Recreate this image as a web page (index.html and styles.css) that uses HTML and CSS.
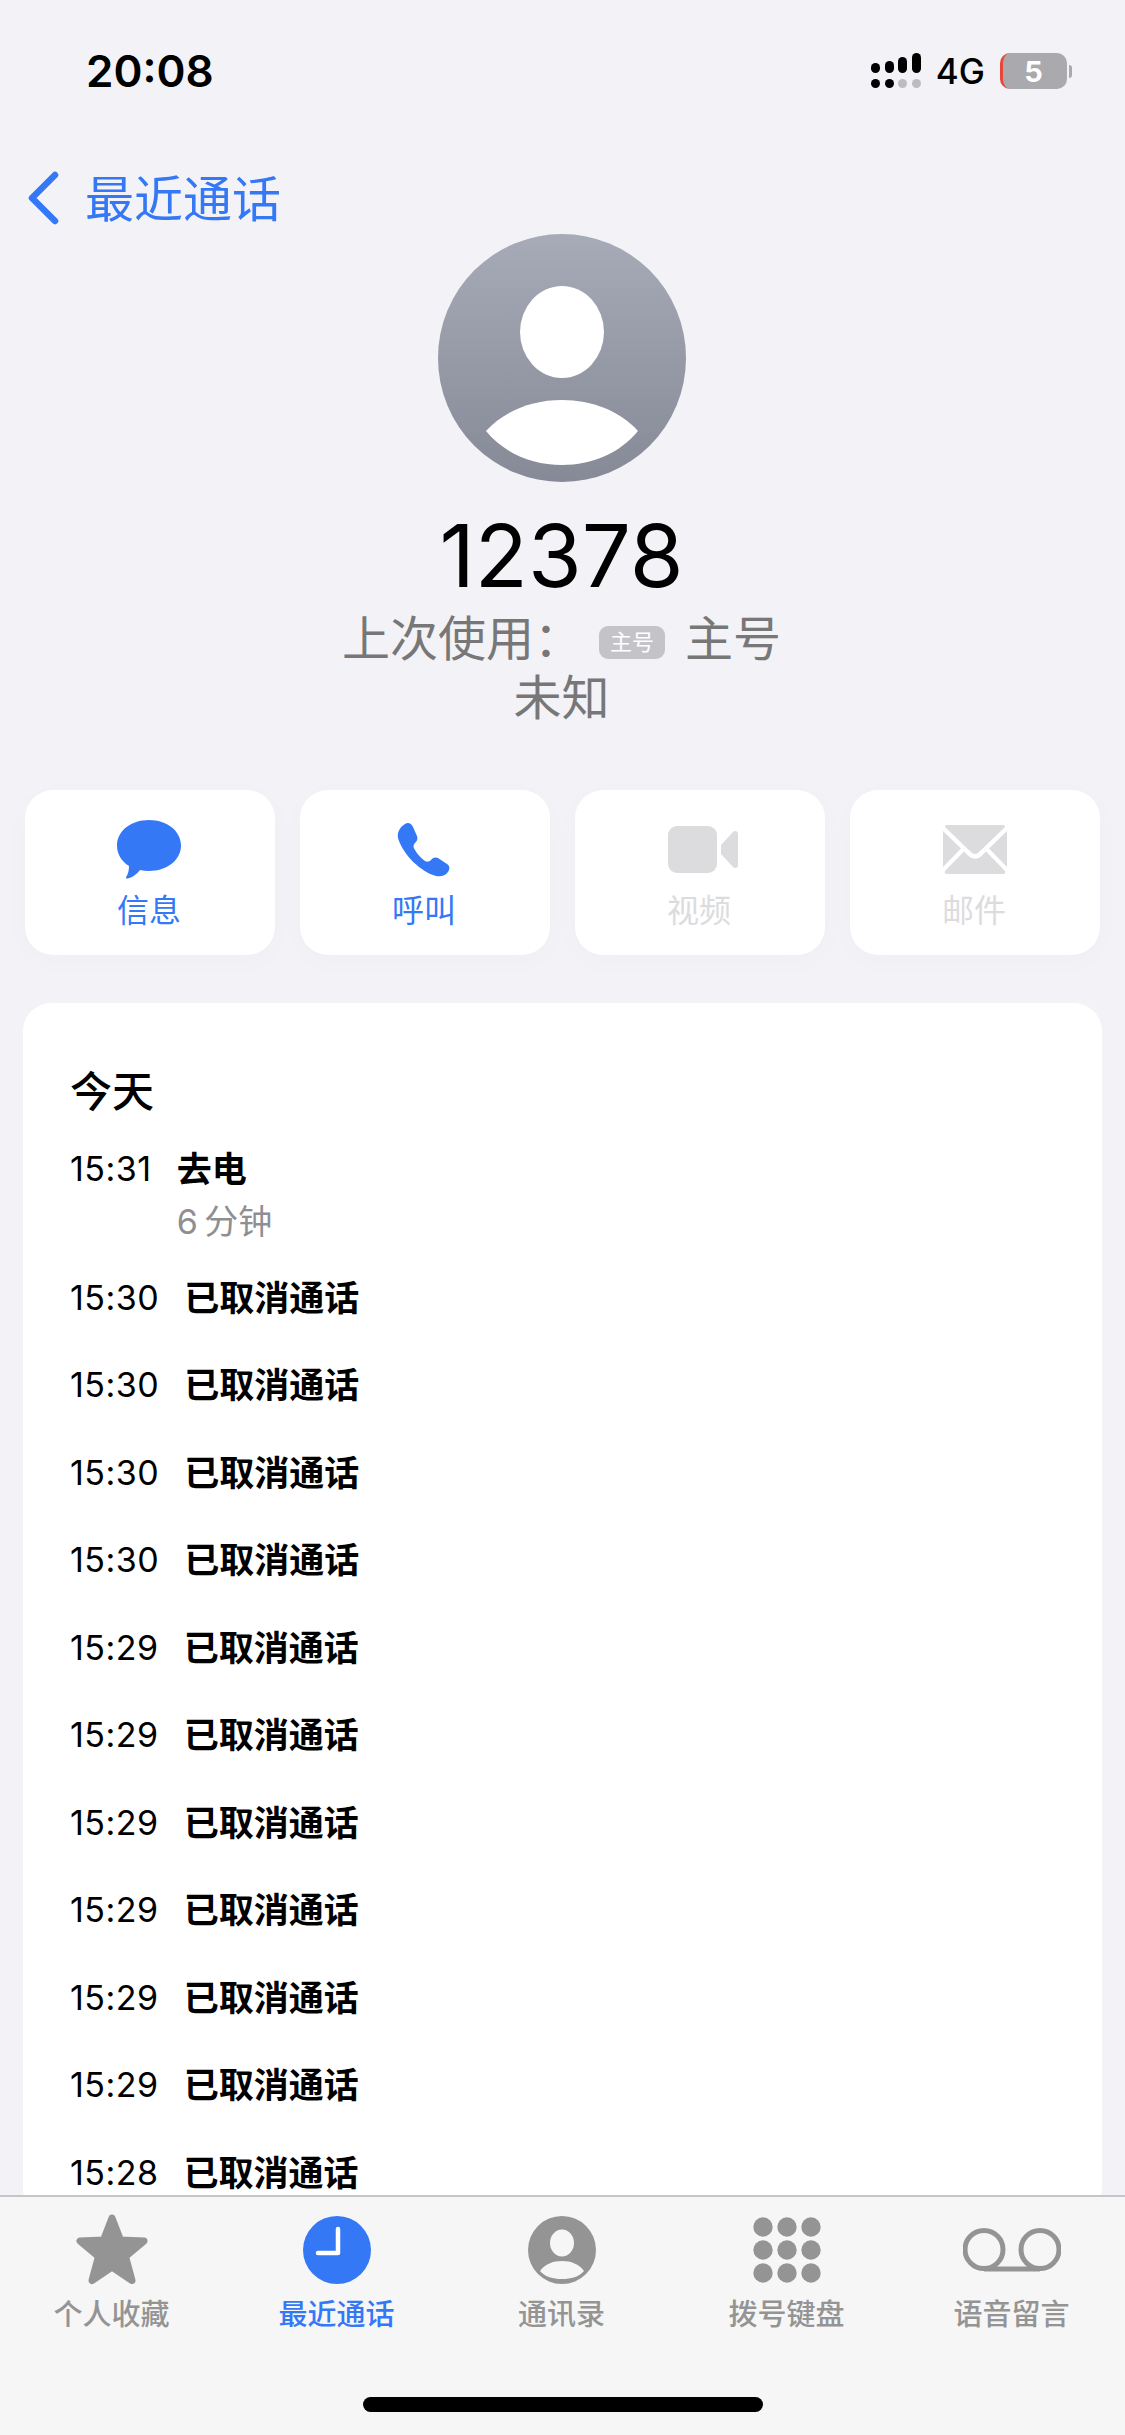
FILE: index.html
```html
<!DOCTYPE html>
<html lang="zh-CN">
<head>
  <meta charset="UTF-8" />
  <meta name="viewport" content="width=device-width, initial-scale=1.0"/>
  <title>12378 - 最近通话</title>
  <link rel="stylesheet" href="styles.css">
</head>
<body>
  <div class="phone">
    <div class="status-bar">
      <div class="clock">20:08</div>
      <div class="status-icons">
        <svg class="signal" width="50" height="36" viewBox="0 0 50 36">
          <rect x="0" y="10" width="9" height="10" rx="4.5" fill="#000"/>
          <rect x="14" y="8" width="9" height="12" rx="4.5" fill="#000"/>
          <rect x="27" y="4" width="9" height="16" rx="4.5" fill="#000"/>
          <rect x="41" y="0" width="9" height="20" rx="4.5" fill="#000"/>
          <circle cx="4.5" cy="30.5" r="4.5" fill="#000"/>
          <circle cx="18.5" cy="30.5" r="4.5" fill="#000"/>
          <circle cx="31.5" cy="30.5" r="4.5" fill="#bdbdc1"/>
          <circle cx="45.5" cy="30.5" r="4.5" fill="#bdbdc1"/>
        </svg>
        <span class="network">4G</span>
        <div class="battery"><span class="battery-level">5</span></div>
        <div class="battery-tip"></div>
      </div>
    </div>

    <div class="main">
      <a class="back">
        <svg width="32" height="54" viewBox="0 0 32 54">
          <path d="M28 4 L5 27 L28 50" fill="none" stroke="#3478f6" stroke-width="6.5" stroke-linecap="round" stroke-linejoin="round"/>
        </svg>
        <span>最近通话</span>
      </a>

      <div class="contact">
        <svg class="avatar" width="248" height="248" viewBox="0 0 248 248">
          <defs>
            <linearGradient id="avatarFill" x1="0" y1="0" x2="0" y2="1">
              <stop offset="0" stop-color="#a7abb7"/>
              <stop offset="1" stop-color="#858a96"/>
            </linearGradient>
          </defs>
          <circle cx="124" cy="124" r="124" fill="url(#avatarFill)"/>
          <ellipse cx="124" cy="98" rx="42" ry="46" fill="#fff"/>
          <path d="M48 197 C66 177 94 166 124 166 C154 166 182 177 200 197 C182 219 154 231 124 231 C94 231 66 219 48 197 Z" fill="#fff"/>
        </svg>
        <div class="number">12378</div>
        <div class="sub-line">上次使用：<span class="sim-badge">主号</span>主号</div>
        <div class="sub-line">未知</div>
      </div>

      <div class="actions">
        <div class="action">
          <svg width="64" height="60" viewBox="0 0 64 60">
            <path d="M32 0 C50 0 64 11 64 25.500 C64 40 50 51 32 51 C29 51 26 50.700 23 50 C20 54 15 58 10 58.500 C9 58.600 8.600 57.800 9.200 57 C11 54.500 12 50.500 12 46 C4.500 41.500 0 34 0 25.500 C0 11 14 0 32 0 Z" fill="#3478f6"/>
          </svg>
          <span>信息</span>
        </div>
        <div class="action">
          <svg width="54" height="54" viewBox="0 0 54 54">
            <path d="M8 1 C11 -1 14 0 16 4 L20 13 C21 16 20 18 18 20 C16 22 16 24 18 27 C21 32 24 35 28 38 C30 39 32 39 34 37 C36 34 39 34 41 35 L50 41 C53 43 53 46 51 49 C48 53 44 54 39 53 C24 49 6 32 1 15 C0 9 3 4 8 1 Z" fill="#3478f6"/>
          </svg>
          <span>呼叫</span>
        </div>
        <div class="action off">
          <svg class="video-icon" width="70" height="48" viewBox="0 0 70 48">
            <rect x="0" y="0" width="49" height="47" rx="9" fill="#dcdcde"/>
            <path d="M53 19 L65 6 C67 4 70 5 70 8 L70 39 C70 42 67 43 65 41 L53 28 Z" fill="#dcdcde"/>
          </svg>
          <span>视频</span>
        </div>
        <div class="action off">
          <svg class="mail-icon" width="64" height="50" viewBox="0 0 64 50">
            <path d="M4 0 L60 0 C62 0 62.500 1.500 61.500 2.500 L36 27 C33.500 29.500 30.500 29.500 28 27 L2.500 2.500 C1.500 1.500 2 0 4 0 Z" fill="#dcdcde"/>
            <path d="M0 6 L18 23.500 L0 42 Z" fill="#dcdcde"/>
            <path d="M64 6 L46 23.500 L64 42 Z" fill="#dcdcde"/>
            <path d="M21 26.500 L25.500 31 C29.500 34.500 34.500 34.500 38.500 31 L43 26.500 L62 46 C63 47.500 62 49 60 49 L4 49 C2 49 1 47.500 2 46 Z" fill="#dcdcde"/>
          </svg>
          <span>邮件</span>
        </div>
      </div>

      <div class="history">
        <div class="day">今天</div>
        <div class="call first">
          <span class="time">15:31</span>
          <div>
            <div class="what">去电</div>
            <div class="length">6 分钟</div>
          </div>
        </div>
        <div class="call"><span class="time">15:30</span><span class="what">已取消通话</span></div>
        <div class="call"><span class="time">15:30</span><span class="what">已取消通话</span></div>
        <div class="call"><span class="time">15:30</span><span class="what">已取消通话</span></div>
        <div class="call"><span class="time">15:30</span><span class="what">已取消通话</span></div>
        <div class="call"><span class="time">15:29</span><span class="what">已取消通话</span></div>
        <div class="call"><span class="time">15:29</span><span class="what">已取消通话</span></div>
        <div class="call"><span class="time">15:29</span><span class="what">已取消通话</span></div>
        <div class="call"><span class="time">15:29</span><span class="what">已取消通话</span></div>
        <div class="call"><span class="time">15:29</span><span class="what">已取消通话</span></div>
        <div class="call"><span class="time">15:29</span><span class="what">已取消通话</span></div>
        <div class="call"><span class="time">15:28</span><span class="what">已取消通话</span></div>
      </div>
    </div>

    <nav class="tabs">
      <div class="tab">
        <div class="tab-icon">
          <svg width="74" height="72" viewBox="0 0 74 72">
            <path d="M37 4 L45.500 26 L69 27 L50.500 42.500 L57 66.500 L37 53 L17 66.500 L23.500 42.500 L5 27 L28.500 26 Z" fill="#949494" stroke="#949494" stroke-width="7" stroke-linejoin="round"/>
          </svg>
        </div>
        <span>个人收藏</span>
      </div>
      <div class="tab on">
        <div class="tab-icon">
          <svg width="68" height="68" viewBox="0 0 68 68">
            <circle cx="34" cy="34" r="34" fill="#3478f6"/>
            <path d="M35 13 L35 37 L15 37" fill="none" stroke="#fff" stroke-width="4.500" stroke-linecap="round" stroke-linejoin="round"/>
          </svg>
        </div>
        <span>最近通话</span>
      </div>
      <div class="tab">
        <div class="tab-icon">
          <svg width="68" height="68" viewBox="0 0 68 68">
            <circle cx="34" cy="34" r="34" fill="#949494"/>
            <ellipse cx="34" cy="27" rx="12" ry="13.500" fill="#f6f6f7"/>
            <path d="M12 55 C17 48 25 45 34 45 C43 45 51 48 56 55 C51 61 43 63 34 63 C25 63 17 61 12 55 Z" fill="#f6f6f7"/>
          </svg>
        </div>
        <span>通讯录</span>
      </div>
      <div class="tab">
        <div class="tab-icon">
          <svg width="68" height="66" viewBox="0 0 68 66">
            <circle cx="10" cy="10" r="9.700" fill="#949494"/>
            <circle cx="34" cy="10" r="9.700" fill="#949494"/>
            <circle cx="58" cy="10" r="9.700" fill="#949494"/>
            <circle cx="10" cy="33" r="9.700" fill="#949494"/>
            <circle cx="34" cy="33" r="9.700" fill="#949494"/>
            <circle cx="58" cy="33" r="9.700" fill="#949494"/>
            <circle cx="10" cy="56" r="9.700" fill="#949494"/>
            <circle cx="34" cy="56" r="9.700" fill="#949494"/>
            <circle cx="58" cy="56" r="9.700" fill="#949494"/>
          </svg>
        </div>
        <span>拨号键盘</span>
      </div>
      <div class="tab">
        <div class="tab-icon">
          <svg width="98" height="44" viewBox="0 0 98 44">
            <circle cx="21" cy="21.500" r="19" fill="none" stroke="#949494" stroke-width="5"/>
            <circle cx="77" cy="21.500" r="19" fill="none" stroke="#949494" stroke-width="5"/>
            <path d="M21 41 L77 41" fill="none" stroke="#949494" stroke-width="5"/>
          </svg>
        </div>
        <span>语音留言</span>
      </div>
      <div class="home-bar"></div>
    </nav>
  </div>
</body>
</html>
```

FILE: styles.css
```css
:root {
  --bg-color: #f2f2f7;
  --card-color: #ffffff;
  --accent-color: #3478f6;
  --muted-color: #949494;
  --off-color: #dcdcde;
}
body {
  margin: 0;
  background-color: var(--bg-color);
  font-family: Inter, "Noto Sans CJK SC", sans-serif;
  color: #000;
}
.phone {
  width: 1125px;
  height: 2435px;
  display: flex;
  flex-direction: column;
  overflow: hidden;
}

/* Status bar */
.status-bar {
  flex: none;
  height: 108px;
  display: flex;
  justify-content: space-between;
  padding: 0 53px 0 86px;
  box-sizing: border-box;
}
.clock {
  margin-top: 46px;
  font-size: 44px;
  line-height: 50px;
  font-weight: 600;
}
.status-icons {
  display: flex;
  align-items: flex-start;
  padding-top: 53px;
}
.network {
  margin-left: 15px;
  font-size: 35px;
  line-height: 36px;
  font-weight: 500;
}
.battery {
  width: 67px;
  height: 36px;
  margin-left: 15px;
  padding-right: 3px;
  box-sizing: border-box;
  border-left: 3px solid #e5483a;
  border-radius: 10px;
  background-color: #a9a9ae;
  display: flex;
  align-items: center;
  justify-content: center;
}
.battery-level {
  color: #fff;
  font-size: 29px;
  font-weight: 700;
}
.battery-tip {
  width: 3px;
  height: 13px;
  margin: 12px 0 0 2px;
  border-radius: 0 4px 4px 0;
  background-color: #a9a9ae;
}

/* Main */
.main {
  flex: 1;
  min-height: 0;
  overflow: hidden;
}
.back {
  display: flex;
  align-items: center;
  gap: 26px;
  height: 54px;
  margin-top: 63px;
  padding-left: 27px;
  color: var(--accent-color);
  font-size: 49px;
}
.back span {
  margin-bottom: 6px;
}
.contact {
  margin-top: 9px;
  padding-right: 2px;
  text-align: center;
}
.avatar {
  display: block;
  margin: 0 auto;
}
.number {
  margin-top: 24px;
  margin-bottom: 3px;
  font-size: 87px;
  line-height: 100px;
}
.sub-line {
  font-size: 48px;
  line-height: 59px;
  color: #777;
}
.sim-badge {
  display: inline-block;
  width: 66px;
  height: 33px;
  margin: 0 20px 0 17px;
  border-radius: 9px;
  background-color: #c4c4c8;
  color: #fff;
  font-size: 22px;
  line-height: 33px;
  vertical-align: 6px;
}

/* Actions */
.actions {
  display: grid;
  grid-template-columns: repeat(4, 250px);
  gap: 25px;
  margin: 63px 0 0 25px;
}
.action {
  height: 165px;
  box-sizing: border-box;
  padding: 30px 2px 0 0;
  display: flex;
  flex-direction: column;
  align-items: center;
  border-radius: 28px;
  background-color: var(--card-color);
  box-shadow: 0 6px 30px rgba(0, 0, 0, 0.02);
  color: var(--accent-color);
  font-size: 32px;
}
.action svg {
  height: 60px;
}
.action .video-icon {
  margin-left: 8px;
}
.action .mail-icon {
  margin-left: 2px;
}
.action span {
  margin-top: 9px;
  line-height: 44px;
}
.action.off {
  color: var(--off-color);
}

/* History */
.history {
  margin: 48px 23px 0;
  padding: 61px 47px 0;
  border-radius: 28px;
  background-color: var(--card-color);
}
.day {
  font-size: 42px;
  line-height: 56px;
  font-weight: 500;
}
.call {
  display: flex;
  align-items: center;
  gap: 25px;
  height: 87.5px;
  font-size: 35px;
}
.call.first {
  align-items: flex-start;
  height: auto;
  margin-top: 27px;
  margin-bottom: 10px;
}
.time,
.what,
.length {
  line-height: 44px;
}
.time {
  font-size: 34px;
  letter-spacing: 0.5px;
}
.what {
  font-weight: 700;
}
.length {
  margin-top: 9px;
  color: #8e8e93;
  font-size: 34px;
  word-spacing: -3px;
}

/* Tab bar */
.tabs {
  flex: none;
  position: relative;
  height: 240px;
  box-sizing: border-box;
  display: grid;
  grid-template-columns: repeat(5, 225px);
  border-top: 2px solid #c6c6c8;
  background-color: #f6f6f7;
}
.tab {
  display: flex;
  flex-direction: column;
  align-items: center;
  margin-left: -2px;
  color: var(--muted-color);
  font-size: 29px;
  font-weight: 500;
}
.tab.on {
  color: var(--accent-color);
}
.tab-icon {
  height: 74px;
  margin-top: 16px;
  display: flex;
  align-items: center;
  justify-content: center;
}
.tab span {
  margin-top: 8px;
  line-height: 40px;
}
.home-bar {
  position: absolute;
  left: 363px;
  bottom: 23px;
  width: 400px;
  height: 15px;
  border-radius: 8px;
  background-color: #000;
}
```
